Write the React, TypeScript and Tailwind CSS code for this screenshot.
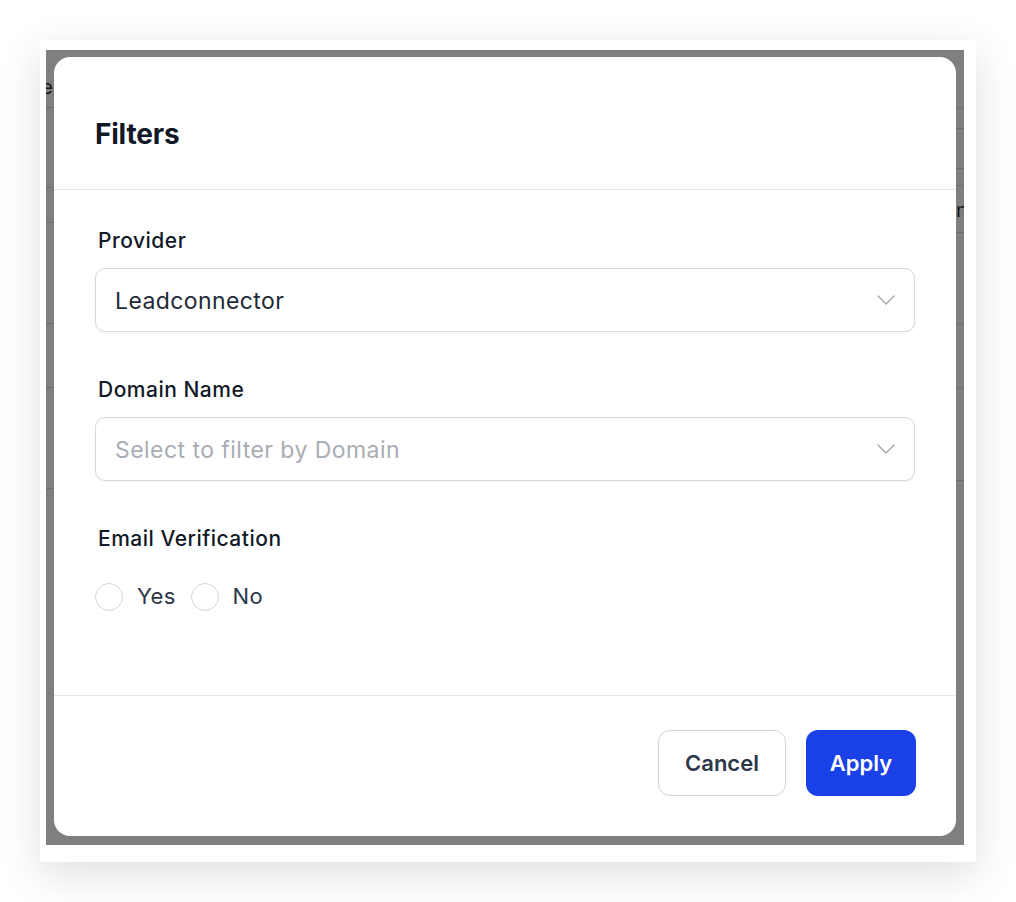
import { useState } from 'react';

const font = { fontFamily: 'Inter, "Noto Sans", sans-serif' };

function Chevron() {
  return (
    <svg width="18" height="10" viewBox="0 0 18 10" fill="none" className="shrink-0">
      <path d="M1 1l8 8 8-8" stroke="#a3a6ad" strokeWidth="1.4" strokeLinecap="round" strokeLinejoin="round" />
    </svg>
  );
}

function SelectBox({ value, placeholder }: { value?: string; placeholder: string }) {
  return (
    <div className="flex items-center justify-between h-[64px] pl-[19px] pr-[19px] rounded-[10px] border border-[#d6d8dd] bg-white shadow-[0_1px_2px_rgba(0,0,0,0.05)]">
      {value ? (
        <span className="pt-[3px] text-[23px] tracking-[0.4px] text-[#1f2937]">{value}</span>
      ) : (
        <span className="pt-[3px] text-[23px] tracking-[0.45px] text-[#a9adb4]">{placeholder}</span>
      )}
      <Chevron />
    </div>
  );
}

function Radio({ label, checked, onClick }: { label: string; checked: boolean; onClick: () => void }) {
  return (
    <button onClick={onClick} className="flex items-center gap-[14px]">
      <span
        className={`h-[28px] w-[28px] rounded-full ${
          checked ? 'border-[8px] border-[#1a40e8]' : 'border-[1.5px] border-[#d4d6db]'
        } bg-white`}
      />
      <span className="text-[22px] tracking-[0.3px] text-[#2d3748]">{label}</span>
    </button>
  );
}

export default function App() {
  const [verified, setVerified] = useState<'yes' | 'no' | null>(null);

  return (
    <div className="min-h-[902px] w-[1016px] bg-white pt-[40px] pl-[40px]" style={font}>
      {/* screenshot frame */}
      <div className="w-[936px] h-[822px] bg-white pt-[10px] pl-[6px] pr-[12px] pb-[17px] shadow-[0_12px_40px_rgba(0,0,0,0.13)]">
        <div className="relative h-full w-full overflow-hidden bg-white">
          {/* page behind the dialog */}
          <div className="flex h-full justify-between">
            <div className="w-[20px] flex flex-col">
              <div className="h-[57px] pt-[22px] flex justify-end w-[7px] whitespace-nowrap text-[20px] text-[#333]">Name</div>
              <div className="h-[80px] border-t border-[#dcdcdc]" />
              <div className="h-[35px] border-t border-[#dcdcdc]" />
              <div className="h-[101px] border-t border-[#dcdcdc]" />
              <div className="h-[64px] border-t border-[#dcdcdc]" />
              <div className="h-[101px] border-t border-[#dcdcdc]" />
              <div className="h-[101px] border-t border-[#dcdcdc]" />
            </div>
            <div className="w-[20px] flex flex-col">
              <div className="h-[57px]" />
              <div className="h-[21px] border-t border-[#dcdcdc]" />
              <div className="h-[40px] border-t border-[#dcdcdc]" />
              <div className="h-[17px] border-t border-[#dcdcdc]" />
              <div className="h-[47px] border-t border-[#dcdcdc] pt-[9px] pl-[12px] whitespace-nowrap text-[20px] text-[#333]">n</div>
              <div className="h-[91px] border-t border-[#dcdcdc]" />
              <div className="h-[64px] border-t border-[#dcdcdc]" />
              <div className="h-[93px] border-t border-[#dcdcdc]" />
              <div className="h-[101px] border-t border-[#dcdcdc]" />
            </div>
          </div>

          {/* overlay */}
          <div className="absolute inset-0 bg-black/50 pl-[8px] pr-[8px] pt-[7px] pb-[9px]">
            <div className="flex h-full flex-col rounded-[16px] bg-white">
              <div className="flex h-[133px] items-center border-b border-[#e5e7eb] px-[41px] pt-[22px]">
                <h2 className="text-[28px] font-bold text-[#111827] tracking-[-0.2px]">Filters</h2>
              </div>

              <div className="flex-1 px-[41px] pt-[37px]">
                <div className="ml-[3px] text-[21px] leading-[28px] font-medium tracking-[0.5px] text-[#111827]">Provider</div>
                <div className="mt-[13px]">
                  <SelectBox value="Leadconnector" placeholder="Select provider" />
                </div>

                <div className="mt-[44px] ml-[3px] text-[21px] leading-[28px] font-medium tracking-[0.5px] text-[#111827]">Domain Name</div>
                <div className="mt-[13px]">
                  <SelectBox placeholder="Select to filter by Domain" />
                </div>

                <div className="mt-[44px] ml-[3px] text-[21px] leading-[28px] font-medium tracking-[0.5px] text-[#111827]">Email Verification</div>
                <div className="mt-[27px] flex items-center gap-[15px]">
                  <Radio label="Yes" checked={verified === 'yes'} onClick={() => setVerified('yes')} />
                  <Radio label="No" checked={verified === 'no'} onClick={() => setVerified('no')} />
                </div>
              </div>

              <div className="flex h-[141px] items-start justify-end gap-[20px] border-t border-[#e5e7eb] pt-[34px] pr-[40px]">
                <button className="h-[66px] w-[128px] rounded-[12px] border border-[#d1d5db] bg-white text-[22px] font-semibold text-[#2d3748]">
                  Cancel
                </button>
                <button className="h-[66px] w-[110px] rounded-[12px] bg-[#1a40e8] text-[22px] font-semibold text-white">
                  Apply
                </button>
              </div>
            </div>
          </div>
        </div>
      </div>
    </div>
  );
}
